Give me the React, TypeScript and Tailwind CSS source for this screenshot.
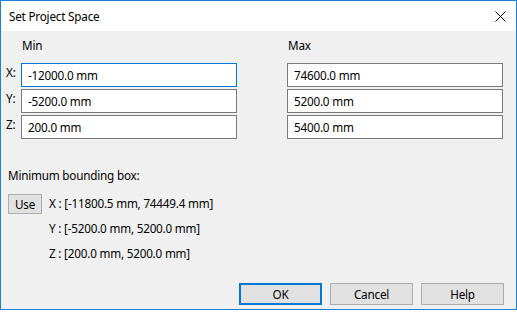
const minValues = ['-12000.0 mm', '-5200.0 mm', '200.0 mm']
const maxValues = ['74600.0 mm', '5200.0 mm', '5400.0 mm']
const axes = ['X:', 'Y:', 'Z:']

const bounds = [
  'X : [-11800.5 mm, 74449.4 mm]',
  'Y : [-5200.0 mm, 5200.0 mm]',
  'Z : [200.0 mm, 5200.0 mm]',
]

function Field({ value, focused }: { value: string; focused?: boolean }) {
  return (
    <div
      className={`flex h-[24px] w-[216px] items-center border bg-white pl-[6px] ${
        focused ? 'border-[#0078d7]' : 'border-[#7a7a7a]'
      }`}
    >
      {value}
    </div>
  )
}

function DialogButton({ label, primary }: { label: string; primary?: boolean }) {
  return (
    <button
      className={`flex h-[22px] w-[83px] items-center justify-center bg-[#e1e1e1] ${
        primary ? 'border-2 border-[#0078d7]' : 'border border-[#adadad]'
      }`}
    >
      {label}
    </button>
  )
}

export default function App() {
  return (
    <div
      className="h-[312px] w-[517px] bg-white text-[11.7px] leading-[16px] tracking-[-0.2px] text-black"
      style={{ fontFamily: '"Segoe UI", "Noto Sans", sans-serif' }}
    >
      <div className="flex h-[310px] flex-col border border-[#1883d7]">
        <div className="flex h-[30px] items-center justify-between bg-white pl-[8px] pr-[10px]">
          <span>Set Project Space</span>
          <svg width="11" height="11" viewBox="0 0 11 11" className="mt-[1px]">
            <path d="M0.5 0.5 L10.5 10.5 M10.5 0.5 L0.5 10.5" stroke="#000" strokeWidth="1" />
          </svg>
        </div>

        <div className="flex flex-1 flex-col bg-[#f0f0f0] pl-[5px] pr-[12px]">
          <div className="mt-[6px] flex">
            <span className="ml-[16px] w-[266px]">Min</span>
            <span>Max</span>
          </div>

          <div className="mt-[10px] flex flex-col gap-[2px]">
            {axes.map((axis, i) => (
              <div key={axis} className="flex">
                <span className="mt-[1px] w-[15px]">{axis}</span>
                <Field value={minValues[i]} focused={i === 0} />
                <div className="w-[50px]" />
                <Field value={maxValues[i]} />
              </div>
            ))}
          </div>

          <div className="mt-[28px] pl-[2px]">Minimum bounding box:</div>

          <div className="mt-[7px] flex pl-[2px]">
            <button className="mt-[4px] flex h-[20px] w-[34px] items-center justify-center border border-[#adadad] bg-[#e1e1e1]">
              Use
            </button>
            <div className="ml-[7px] flex flex-col">
              {bounds.map((line) => (
                <div key={line} className="flex h-[25px] items-center">
                  {line}
                </div>
              ))}
            </div>
          </div>

          <div className="mt-[18px] flex justify-end gap-[8px]">
            <DialogButton label="OK" primary />
            <DialogButton label="Cancel" />
            <DialogButton label="Help" />
          </div>
        </div>
      </div>
    </div>
  )
}
